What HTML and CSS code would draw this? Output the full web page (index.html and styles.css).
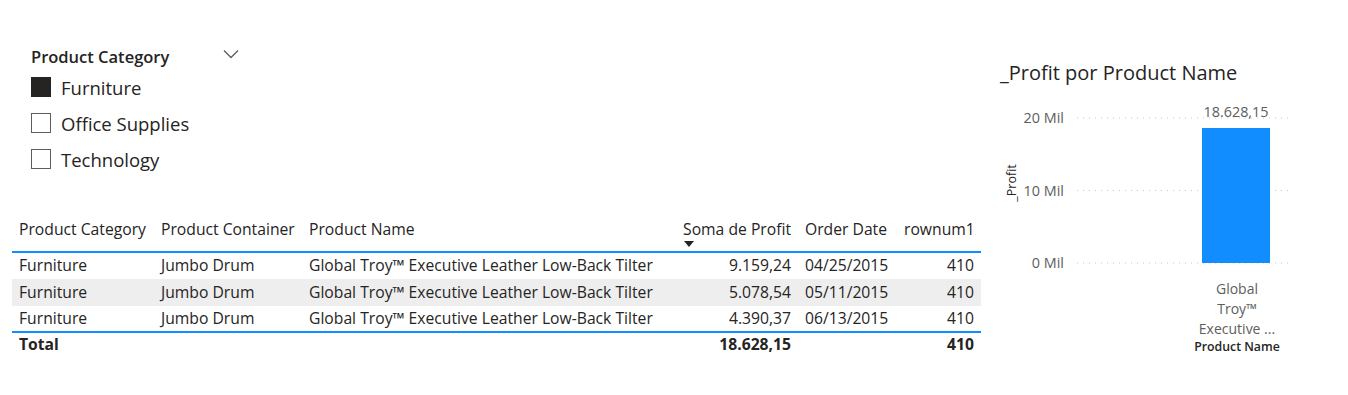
FILE: index.html
```html
<!DOCTYPE html>
<html lang="pt">
<head>
    <meta charset="UTF-8">
    <meta name="viewport" content="width=device-width, initial-scale=1.0">
    <title>Profit report</title>
    <link rel="stylesheet" href="styles.css">
</head>
<body>
    <div class="page">
        <section class="report">
            <div class="slicer">
                <div class="slicer-head">
                    <span>Product Category</span>
                    <svg class="chevron" width="16" height="10" viewBox="0 0 16 10">
                        <path d="M1 1.5 L8 8.5 L15 1.5" fill="none" stroke="#605E5C" stroke-width="1.3"/>
                    </svg>
                </div>
                <ul class="slicer-list">
                    <li><span class="box checked"></span>Furniture</li>
                    <li><span class="box"></span>Office Supplies</li>
                    <li><span class="box"></span>Technology</li>
                </ul>
            </div>

            <table class="grid">
                <colgroup>
                    <col style="width:142px">
                    <col style="width:148px">
                    <col style="width:358px">
                    <col style="width:138px">
                    <col style="width:99px">
                    <col style="width:84px">
                </colgroup>
                <thead>
                    <tr>
                        <th>Product Category</th>
                        <th>Product Container</th>
                        <th>Product Name</th>
                        <th class="num"><span class="sorted">Soma de Profit<i class="sort-arrow"></i></span></th>
                        <th>Order Date</th>
                        <th class="num">rownum1</th>
                    </tr>
                </thead>
                <tbody>
                    <tr>
                        <td>Furniture</td>
                        <td>Jumbo Drum</td>
                        <td>Global Troy™ Executive Leather Low-Back Tilter</td>
                        <td class="num">9.159,24</td>
                        <td>04/25/2015</td>
                        <td class="num">410</td>
                    </tr>
                    <tr class="alt">
                        <td>Furniture</td>
                        <td>Jumbo Drum</td>
                        <td>Global Troy™ Executive Leather Low-Back Tilter</td>
                        <td class="num">5.078,54</td>
                        <td>05/11/2015</td>
                        <td class="num">410</td>
                    </tr>
                    <tr>
                        <td>Furniture</td>
                        <td>Jumbo Drum</td>
                        <td>Global Troy™ Executive Leather Low-Back Tilter</td>
                        <td class="num">4.390,37</td>
                        <td>06/13/2015</td>
                        <td class="num">410</td>
                    </tr>
                </tbody>
                <tfoot>
                    <tr>
                        <td>Total</td>
                        <td></td>
                        <td></td>
                        <td class="num">18.628,15</td>
                        <td></td>
                        <td class="num">410</td>
                    </tr>
                </tfoot>
            </table>
        </section>

        <section class="chart">
            <h2 class="chart-title">_Profit por Product Name</h2>
            <svg class="plot" width="348" height="280" viewBox="0 0 348 280">
                <g class="gridlines">
                    <line x1="77" y1="33" x2="292" y2="33"/>
                    <line x1="77" y1="105.5" x2="292" y2="105.5"/>
                    <line x1="77" y1="178" x2="292" y2="178"/>
                </g>
                <g class="y-labels">
                    <text x="64" y="38">20 Mil</text>
                    <text x="64" y="110.5">10 Mil</text>
                    <text x="64" y="183">0 Mil</text>
                </g>
                <text class="axis-title" transform="translate(16 98) rotate(-90)">_Profit</text>
                <rect class="bar" x="202" y="43" width="68" height="135"/>
                <text class="data-label" x="236" y="32">18.628,15</text>
                <g class="x-labels">
                    <text x="237" y="209">Global</text>
                    <text x="237" y="229">Troy™</text>
                    <text x="237" y="249">Executive ...</text>
                </g>
                <text class="x-title" x="237" y="266">Product Name</text>
            </svg>
        </section>
    </div>
</body>
</html>
```

FILE: styles.css
```css
body {
    margin: 0;
    font-family: "Open Sans", "Noto Sans", sans-serif;
    color: #252423;
    background-color: #fff;
}
.page {
    display: flex;
    width: 1348px;
    height: 395px;
    overflow: hidden;
}
.report {
    width: 990px;
}
.slicer {
    width: 210px;
    margin: 46px 0 0 31px;
}
.slicer-head {
    display: flex;
    justify-content: space-between;
    align-items: flex-start;
    height: 22px;
    line-height: 22px;
    font-size: 16.5px;
    font-weight: 600;
}
.chevron {
    margin-top: 3px;
    margin-right: 2px;
}
.slicer-list {
    list-style: none;
    margin: 1px 0 0;
    padding: 0;
}
.slicer-list li {
    display: flex;
    align-items: center;
    gap: 10px;
    height: 36px;
    font-size: 18.5px;
}
.box {
    width: 18px;
    height: 18px;
    border: 1px solid #605E5C;
}
.box.checked {
    background-color: #252423;
    border-color: #252423;
}
.grid {
    margin: 39px 0 0 12px;
    width: 969px;
    table-layout: fixed;
    border-collapse: collapse;
    font-size: 15.7px;
    line-height: 21px;
}
.grid th,
.grid td {
    padding: 0 7px 1px;
    text-align: left;
    white-space: nowrap;
}
.grid th {
    height: 32px;
    padding-top: 3px;
    padding-bottom: 0;
    vertical-align: top;
    font-weight: 400;
}
.grid thead tr {
    border-bottom: 2px solid #118DFF;
}
.grid tbody tr {
    height: 27px;
}
.grid tbody tr:last-child {
    height: 26px;
    border-bottom: 2px solid #118DFF;
}
.grid tr.alt {
    background-color: #EEEEEE;
}
.grid tfoot tr {
    height: 24px;
    font-weight: 700;
}
.grid .num {
    text-align: right;
}
.sorted {
    display: inline-block;
    text-align: left;
}
.sort-arrow {
    display: block;
    width: 0;
    height: 0;
    margin: 1px 0 0 1px;
    border-left: 5.5px solid transparent;
    border-right: 5.5px solid transparent;
    border-top: 6px solid #252423;
}
.chart {
    flex: 1;
    padding-left: 10px;
}
.chart-title {
    margin: 60px 0 0;
    font-size: 20px;
    font-weight: 400;
    line-height: 26px;
}
.plot {
    display: block;
    margin-top: -1px;
    font-family: "Open Sans", "Noto Sans", sans-serif;
}
.gridlines line {
    stroke: #C8C6C4;
    stroke-width: 1;
    stroke-dasharray: 1 5;
}
.y-labels text {
    font-size: 14.4px;
    fill: #605E5C;
    text-anchor: end;
}
.axis-title {
    font-size: 12.5px;
    fill: #252423;
    text-anchor: middle;
}
.bar {
    fill: #118DFF;
}
.data-label {
    font-size: 14.4px;
    fill: #605E5C;
    text-anchor: middle;
}
.x-labels text {
    font-size: 14px;
    fill: #605E5C;
    text-anchor: middle;
}
.x-title {
    font-size: 12.3px;
    font-weight: 600;
    fill: #252423;
    text-anchor: middle;
}
```
